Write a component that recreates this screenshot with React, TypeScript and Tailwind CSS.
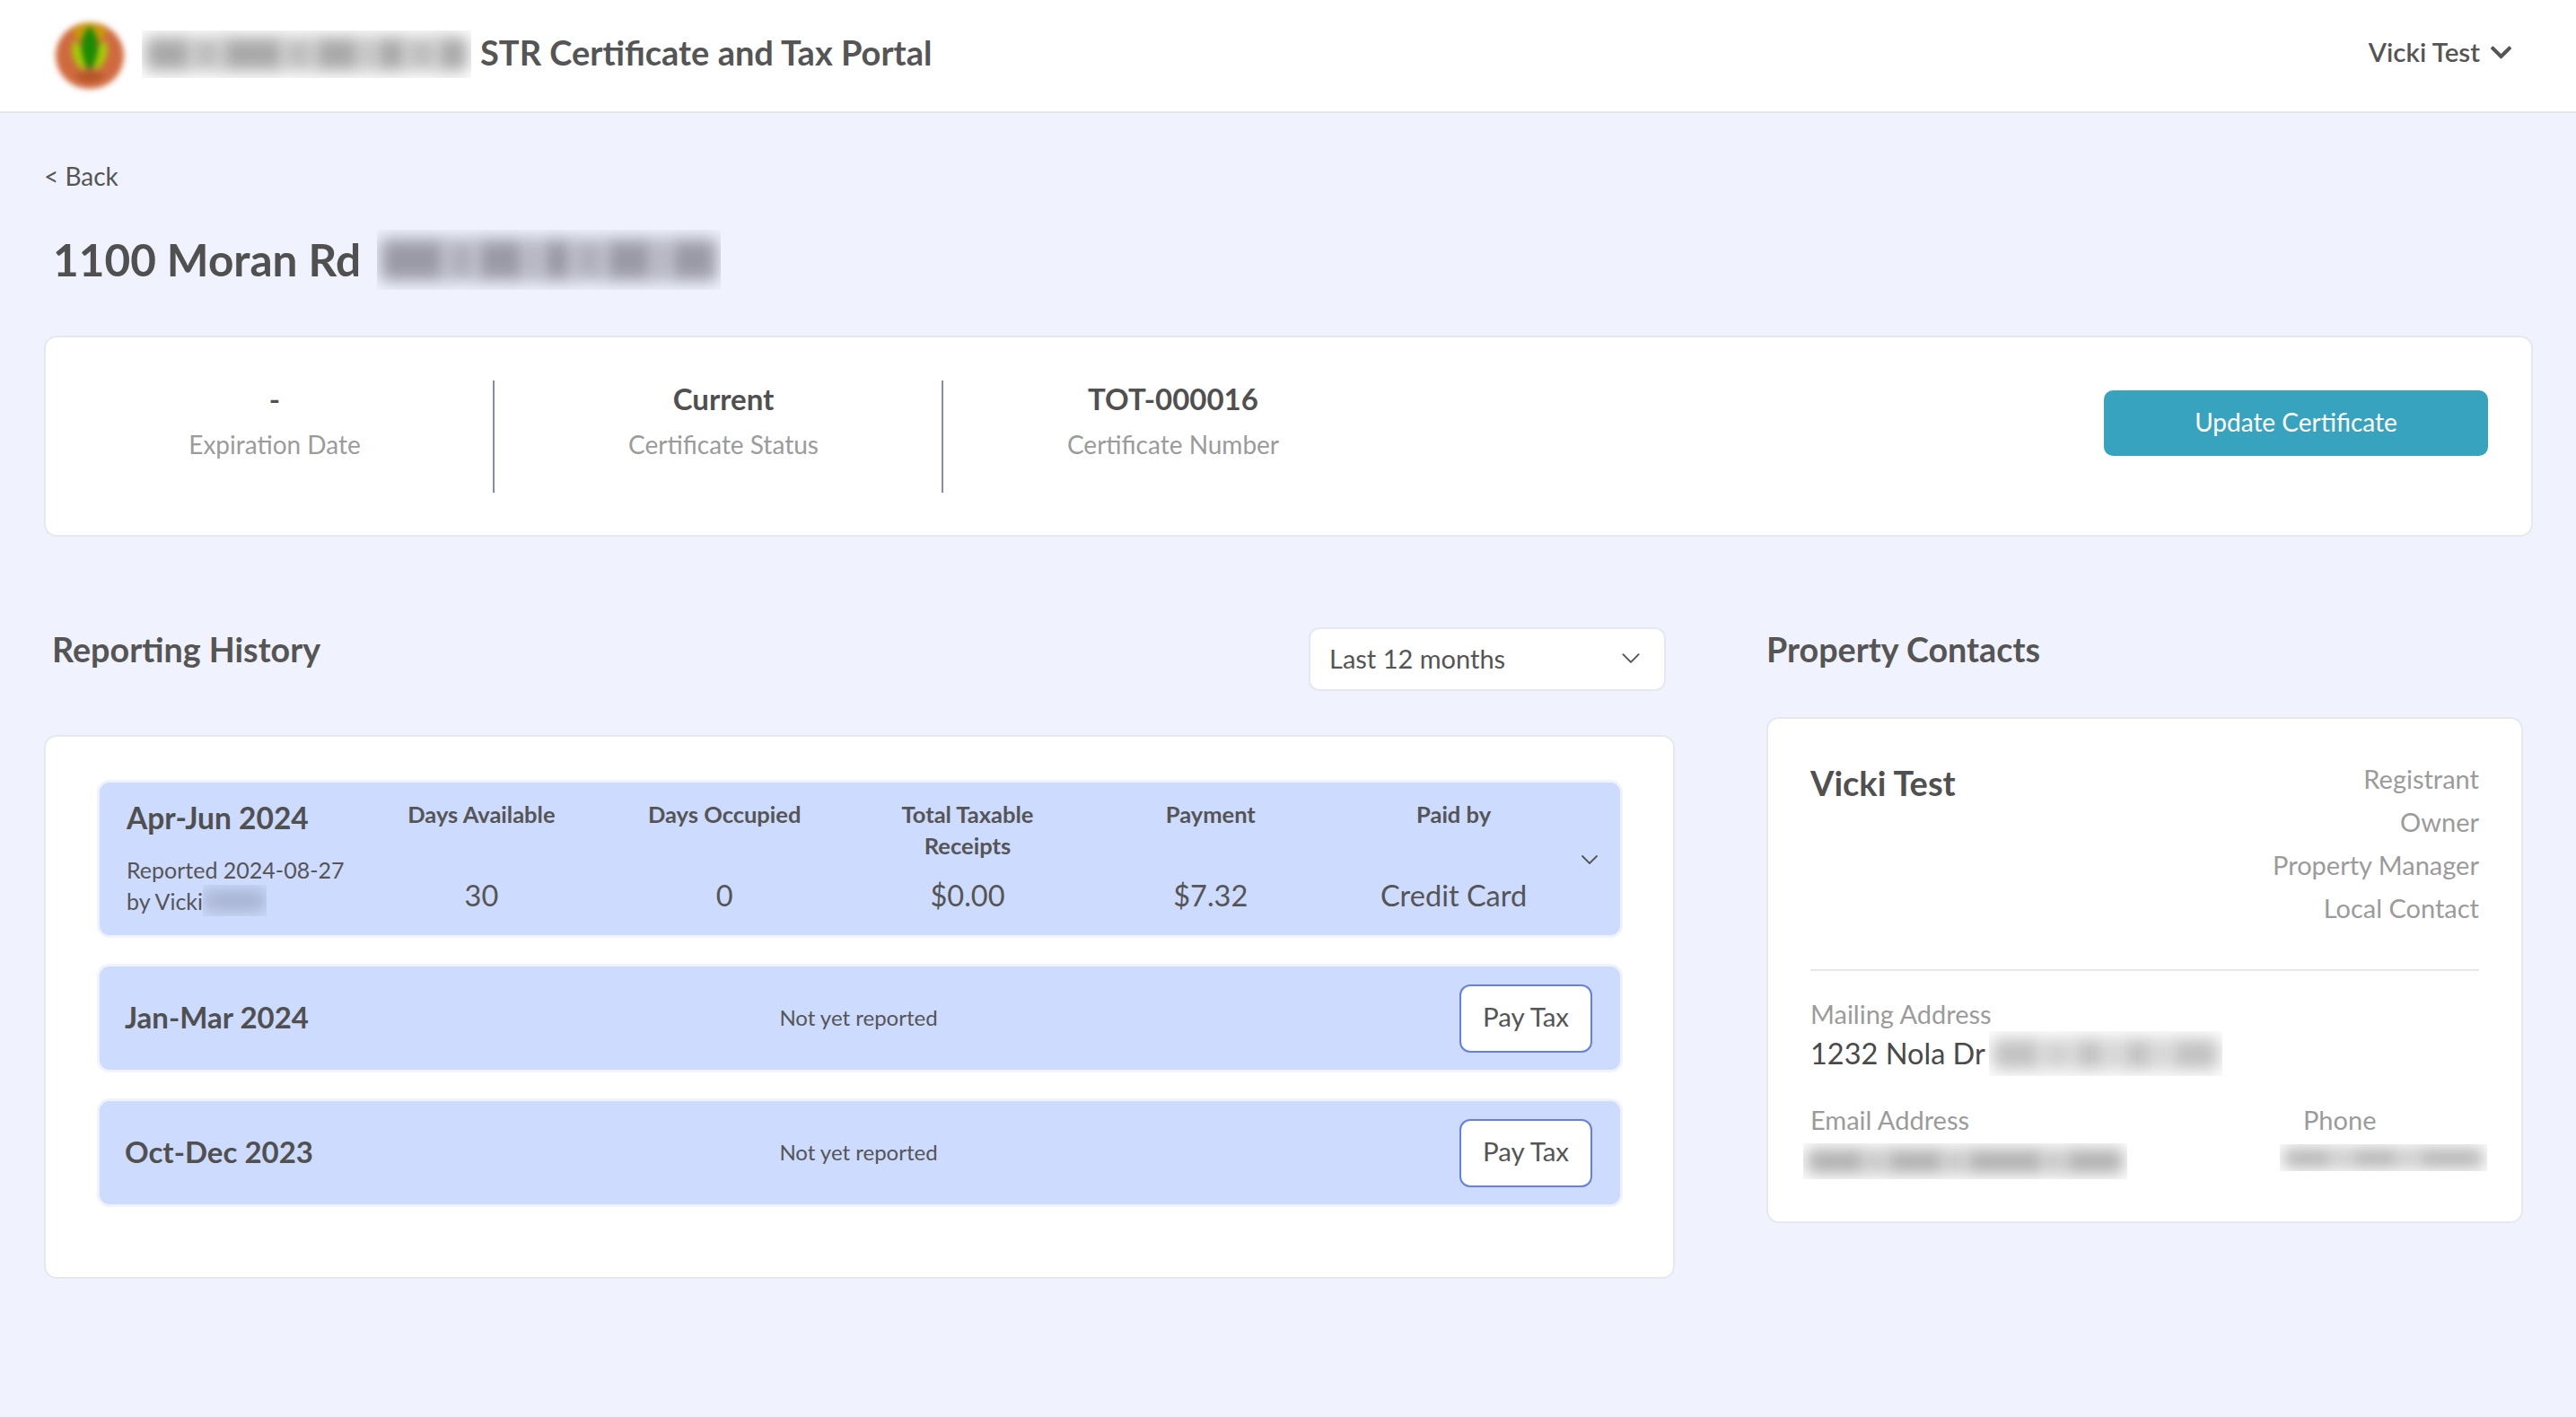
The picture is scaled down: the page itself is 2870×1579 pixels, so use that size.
import React from "react";
import { FaChevronDown } from "react-icons/fa";

// blurred-out personal details in the screenshot
function Smudge({ className, tone = "bg-[#8d8d8d]", bars }: { className: string; tone?: string; bars: number[] }) {
  return (
    <div aria-hidden className={`overflow-hidden flex items-center justify-center px-[4px] ${className}`}>
      {bars.map((w, i) => (
        <div key={i} className={`h-[70%] blur-[9px] ${tone} ${i % 2 ? "opacity-75" : ""}`} style={{ flexGrow: w }} />
      ))}
    </div>
  );
}

function Chevron({ className }: { className: string }) {
  return (
    <svg viewBox="0 0 20 12" fill="none" className={className}>
      <path d="M2 2l8 8 8-8" stroke="currentColor" strokeWidth="1.8" strokeLinecap="round" strokeLinejoin="round" />
    </svg>
  );
}

function Logo() {
  return (
    <svg viewBox="0 0 80 78" className="w-[80px] h-[78px] blur-[3px]">
      <ellipse cx="40" cy="39" rx="38" ry="37" fill="#cf6a3f" />
      <path d="M20 12C30 0 50 0 60 12L40 36z" fill="#c99a06" />
      <path d="M22 22c10 4 14 20 12 34-12-6-17-22-12-34zM58 22c5 12 0 28-12 34-2-14 2-30 12-34z" fill="#a9c808" />
      <path d="M40 6c12 12 13 32 0 50C27 38 28 18 40 6z" fill="#1d8a05" />
      <path d="M24 60c8-4 24-4 32 0-4 11-28 11-32 0z" fill="#b5562a" />
    </svg>
  );
}

function Stat({ value, label, divider }: { value: string; label: string; divider?: boolean }) {
  return (
    <div className={`w-[500px] h-[125px] pl-[12px] text-center ${divider ? "border-r-2 border-[#7f8cc0]" : ""}`}>
      <div className="-mt-[2px] text-[33px] leading-[44px] font-bold text-[#505050]">{value}</div>
      <div className="mt-[7px] text-[28px] leading-[44px] text-[#9b9b9b]">{label}</div>
    </div>
  );
}

function Metric({ label, value }: { label: React.ReactNode; value: string }) {
  return (
    <div className="w-[270.8px] flex flex-col items-center text-center">
      <div className="h-[86px] text-[25.5px] leading-[35px] font-bold text-[#555555]">{label}</div>
      <div className="text-[32.5px] leading-[44px] text-[#555555]">{value}</div>
    </div>
  );
}

function PendingRow({ period }: { period: string }) {
  return (
    <div className="h-[121px] grid grid-cols-[1fr_auto_1fr] items-center pl-[28px] pr-[31px] rounded-[14px] border-[3px] border-[#eff3fe] bg-[#cddbfe]">
      <div className="pb-[2px] text-[33px] font-bold text-[#505050]">{period}</div>
      <div className="pb-[2px] text-[24px] text-[#555555]">Not yet reported</div>
      <button className="justify-self-end w-[148px] h-[76px] pb-[2px] rounded-[12px] border-2 border-[#6480e3] bg-white text-[29.5px] text-[#555555]">Pay Tax</button>
    </div>
  );
}

export default function App() {
  return (
    <div className="min-h-[1579px] bg-[#f0f3fe] font-['Lato','Noto_Sans',sans-serif] text-[#555555]">
      <header className="h-[126px] flex items-center justify-between pl-[60px] pr-[70px] bg-white border-b-2 border-[#e5e7eb]">
        <div className="flex items-center">
          <Logo />
          <Smudge className="ml-[18px] mb-[4px] w-[367px] h-[53px] bg-white" tone="bg-[#a8a8a8]" bars={[3, 2, 4, 2, 3, 1, 2, 2, 2]} />
          <div className="ml-[10px] mb-[7px] text-[38px] font-bold text-[#555555]">STR Certificate and Tax Portal</div>
        </div>
        <div className="flex items-center gap-[10px] mb-[7px]">
          <span className="text-[29.5px] font-semibold">Vicki Test</span>
          <FaChevronDown className="w-[27px] h-[27px]" />
        </div>
      </header>

      <main className="pl-[49px] pr-[48px]">
        <div className="pt-[52px] text-[28px] leading-[36px]">&lt; Back</div>
        <div className="mt-[42px] pl-[10px] flex items-center">
          <h1 className="text-[49.5px] leading-[67px] font-bold text-[#505050]">1100 Moran Rd</h1>
          <Smudge className="ml-[18px] w-[383px] h-[67px]" tone="bg-[#9a9aa6]" bars={[4, 2, 3, 1, 2, 2, 3, 1, 3]} />
        </div>

        <section className="mt-[51px] h-[224px] flex justify-between items-start pr-[48px] pt-[48px] bg-white rounded-[14px] border-2 border-[#e6e8f0]">
          <div className="flex">
            <Stat value="-" label="Expiration Date" divider />
            <Stat value="Current" label="Certificate Status" divider />
            <Stat value="TOT-000016" label="Certificate Number" />
          </div>
          <button className="mt-[11px] w-[428px] h-[73px] pb-[3px] rounded-[10px] bg-[#38a3bf] text-white text-[28px]">Update Certificate</button>
        </section>

        <div className="mt-[101px] flex gap-[102px]">
          <div className="w-[1817px]">
            <div className="flex justify-between h-[120px] pl-[9px] pr-[10px]">
              <h2 className="text-[37.7px] leading-[50px] font-bold">Reporting History</h2>
              <div className="w-[398px] h-[71px] flex items-center justify-between pl-[21px] pr-[26px] pb-[2px] bg-white rounded-[12px] border-2 border-[#e6e8f0]">
                <span className="text-[29px]">Last 12 months</span>
                <Chevron className="w-[22px] h-[13px]" />
              </div>
            </div>
            <section className="h-[606px] pt-[48px] pl-[57px] pr-[56px] bg-white rounded-[14px] border-2 border-[#e6e8f0]">
              <div className="relative h-[176px] flex pl-[30px] pt-[18px] rounded-[14px] border-[3px] border-[#eff3fe] bg-[#cddbfe]">
                <div className="w-[260px] shrink-0">
                  <div className="-mt-[1px] text-[33.5px] leading-[44px] font-bold text-[#505050]">Apr-Jun 2024</div>
                  <div className="mt-[19px] text-[25px] leading-[34px] whitespace-nowrap">Reported 2024-08-27</div>
                  <div className="flex items-center text-[25px] leading-[34px]">
                    by Vicki
                    <Smudge className="w-[71px] h-[35px] !px-0" tone="bg-[#a7b2cf]" bars={[1]} />
                  </div>
                </div>
                <Metric label="Days Available" value="30" />
                <Metric label="Days Occupied" value="0" />
                <Metric label={<>Total Taxable<br />Receipts</>} value="$0.00" />
                <Metric label="Payment" value="$7.32" />
                <Metric label="Paid by" value="Credit Card" />
                <Chevron className="absolute right-[24px] top-[80px] w-[20px] h-[12px]" />
              </div>
              <div className="mt-[29px] flex flex-col gap-[29px]">
                <PendingRow period="Jan-Mar 2024" />
                <PendingRow period="Oct-Dec 2023" />
              </div>
            </section>
          </div>

          <div className="w-[843px]">
            <h2 className="text-[37.7px] leading-[50px] font-bold">Property Contacts</h2>
            <section className="mt-[50px] h-[564px] px-[47px] pt-[47px] bg-white rounded-[14px] border-2 border-[#e6e8f0]">
              <div className="flex justify-between h-[234px] border-b-2 border-[#e5e7eb]">
                <div className="-mt-[1px] text-[38px] leading-[50px] font-bold text-[#505050]">Vicki Test</div>
                <div className="-mt-[4px] text-right text-[29px] leading-[48px] text-[#9b9b9b]">
                  <div>Registrant</div>
                  <div>Owner</div>
                  <div>Property Manager</div>
                  <div>Local Contact</div>
                </div>
              </div>
              <div className="mt-[30px] text-[29px] leading-[36px] text-[#9b9b9b]">Mailing Address</div>
              <div className="flex items-center h-[50px] mt-[1px]">
                <span className="text-[32.5px] text-[#4a4a4a]">1232 Nola Dr</span>
                <Smudge className="ml-[4px] w-[260px] h-[50px]" tone="bg-[#c2c2c2]" bars={[3, 2, 2, 1, 2, 1, 3]} />
              </div>
              <div className="mt-[31px] flex">
                <div className="w-[549px] shrink-0">
                  <div className="text-[29px] leading-[36px] text-[#9b9b9b]">Email Address</div>
                  <Smudge className="ml-[-8px] mt-[8px] w-[361px] h-[40px]" tone="bg-[#b0b0b0]" bars={[3, 1, 3, 1, 4, 1, 3]} />
                </div>
                <div className="shrink-0">
                  <div className="text-[29px] leading-[36px] text-[#9b9b9b]">Phone</div>
                  <Smudge className="ml-[-26px] mt-[9px] w-[231px] h-[30px]" tone="bg-[#b0b0b0]" bars={[3, 1, 3, 1, 4]} />
                </div>
              </div>
            </section>
          </div>
        </div>
      </main>
    </div>
  );
}
